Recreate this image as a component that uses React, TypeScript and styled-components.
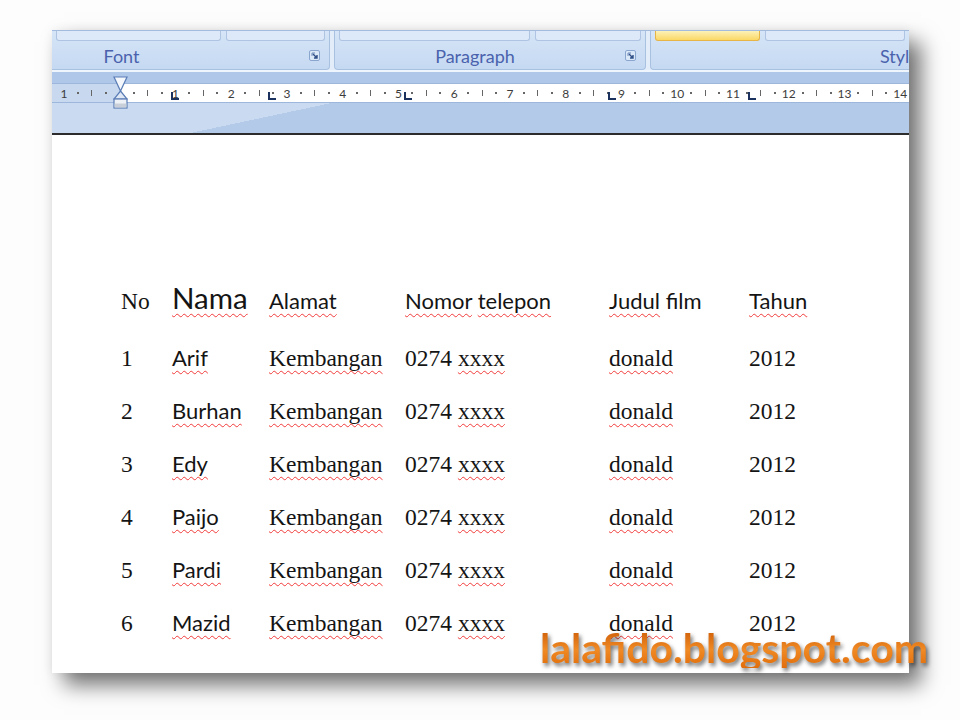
import React from 'react';
import styled, { createGlobalStyle } from 'styled-components';

// column starts, measured from the left edge of the window frame
const columnStarts = [69, 120, 217, 353, 557, 697];

const rows = [
  { no: '1', name: 'Arif' },
  { no: '2', name: 'Burhan' },
  { no: '3', name: 'Edy' },
  { no: '4', name: 'Paijo' },
  { no: '5', name: 'Pardi' },
  { no: '6', name: 'Mazid' },
];

const GlobalStyle = createGlobalStyle`
  html, body {
    margin: 0;
    padding: 0;
    background: #ffffff;
  }
  body {
    width: 960px;
    height: 720px;
    overflow: hidden;
    font-family: 'Lato', 'Liberation Sans', sans-serif;
  }
`;

const RulerMarks: React.FC = () => {
  const marks: React.ReactNode[] = [];
  for (let n = -1; n <= 14; n++) {
    const label = n === 0 ? '' : String(Math.abs(n));
    marks.push(<Mark key={`n${n}`} $kind="num">{label}</Mark>);
    marks.push(<Mark key={`a${n}`} $kind="dot" />);
    marks.push(<Mark key={`b${n}`} $kind="bar" />);
    marks.push(<Mark key={`c${n}`} $kind="dot" />);
  }
  return <Marks>{marks}</Marks>;
};

const Launcher: React.FC = () => (
  <LauncherBox>
    <svg width="11" height="11" viewBox="0 0 11 11">
      <rect x="0.5" y="0.5" width="10" height="10" rx="1.5" fill="#dbe8f8" stroke="#8aa6cf" />
      <path d="M3 3 H6 M3 3 V6" stroke="#6d88b8" strokeWidth="1" fill="none" />
      <path d="M4 4 L8 8 M8 5 V8 H5" stroke="#2f4f86" strokeWidth="1.4" fill="none" />
    </svg>
  </LauncherBox>
);

const IndentMarker: React.FC = () => (
  <Hourglass>
    <svg width="15" height="33" viewBox="0 0 15 33">
      <path d="M1 1 H14 L7.5 15 Z" fill="#f4f8fd" stroke="#5b7db6" strokeWidth="1.2" />
      <path d="M7.5 15 L14 23 H1 Z" fill="#dfe8f4" stroke="#5b7db6" strokeWidth="1.2" />
      <rect x="1" y="23" width="13" height="9" fill="#eef2f7" stroke="#5b7db6" strokeWidth="1.2" />
      <rect x="1.6" y="27.5" width="11.8" height="4" fill="#c9cfd8" />
    </svg>
  </Hourglass>
);

const App: React.FC = () => {
  return (
    <Page>
      <GlobalStyle />
      <Frame>
        <Ribbon>
          <Group $width={278} $cutLeft>
            <Stubs>
              <Stub $width={165} />
              <Stub />
            </Stubs>
            <GroupFoot>
              <GroupLabel $padRight={118}>Font</GroupLabel>
              <Launcher />
            </GroupFoot>
          </Group>
          <Group $width={312}>
            <Stubs>
              <Stub $width={191} />
              <Stub />
            </Stubs>
            <GroupFoot>
              <GroupLabel $padRight={10}>Paragraph</GroupLabel>
              <Launcher />
            </GroupFoot>
          </Group>
          <Group $cutRight>
            <Stubs>
              <Stub $width={105} $active />
              <Stub />
            </Stubs>
            <GroupFoot>
              <GroupLabel $padLeft={229} $left>Styles</GroupLabel>
            </GroupFoot>
          </Group>
        </Ribbon>

        <RulerArea>
          <RulerStrip>
            <RulerMarks />
          </RulerStrip>
          <RulerBelow />
          <IndentMarker />
          {columnStarts.slice(1).map(x => (
            <TabStop key={x} style={{ left: x - 1 }} />
          ))}
        </RulerArea>

        <Document>
          <Table>
            <Row $head>
              <Cell $serif>No</Cell>
              <Cell $size={29.5}><Misspelled>Nama</Misspelled></Cell>
              <Cell><Misspelled>Alamat</Misspelled></Cell>
              <Cell><Misspelled>Nomor</Misspelled> <Misspelled>telepon</Misspelled></Cell>
              <Cell><Misspelled>Judul</Misspelled> film</Cell>
              <Cell><Misspelled>Tahun</Misspelled></Cell>
            </Row>
            {rows.map(r => (
              <Row key={r.no}>
                <Cell $serif>{r.no}</Cell>
                <Cell><Misspelled>{r.name}</Misspelled></Cell>
                <Cell $serif><Misspelled>Kembangan</Misspelled></Cell>
                <Cell $serif>0274 <Misspelled>xxxx</Misspelled></Cell>
                <Cell $serif><Misspelled>donald</Misspelled></Cell>
                <Cell $serif>2012</Cell>
              </Row>
            ))}
          </Table>
        </Document>
      </Frame>
      <Watermark>lalafido.blogspot.com</Watermark>
    </Page>
  );
};

export default App;

const Page = styled.div`
  position: relative;
  width: 960px;
  height: 720px;
  box-sizing: border-box;
  padding: 30px 0 0 52px;
  background: #fdfdfd;
`;

const Frame = styled.div`
  width: 857px;
  height: 643px;
  display: flex;
  flex-direction: column;
  overflow: hidden;
  background: #ffffff;
  box-shadow: 12px 12px 20px rgba(0, 0, 0, 0.55), 0 0 10px rgba(0, 0, 0, 0.06);
`;

const Ribbon = styled.div`
  height: 42px;
  flex: 0 0 42px;
  box-sizing: border-box;
  display: flex;
  gap: 4px;
  background: #e3edf9;
  border-top: 1px solid #a3bbdd;
  border-bottom: 2px solid #eef5fc;
`;

interface GroupProps {
  $width?: number;
  $cutLeft?: boolean;
  $cutRight?: boolean;
}

const Group = styled.div<GroupProps>`
  flex: ${p => (p.$width ? `0 0 ${p.$width}px` : '1')};
  box-sizing: border-box;
  display: flex;
  flex-direction: column;
  background: linear-gradient(#d6e5f7, #c5d9f2);
  border: 1px solid #a9c1e1;
  border-top: none;
  border-left: ${p => (p.$cutLeft ? 'none' : '1px solid #a9c1e1')};
  border-right: ${p => (p.$cutRight ? 'none' : '1px solid #a9c1e1')};
  border-radius: ${p => (p.$cutLeft ? '0 0 4px 0' : p.$cutRight ? '0 0 0 4px' : '0 0 4px 4px')};
  min-width: 0;
`;

const Stubs = styled.div`
  height: 10px;
  display: flex;
  gap: 5px;
  padding: 0 4px;
`;

const Stub = styled.div<{ $width?: number; $active?: boolean }>`
  flex: ${p => (p.$width ? `0 0 ${p.$width}px` : '1')};
  box-sizing: border-box;
  background: ${p => (p.$active ? 'linear-gradient(#fdf1b8, #fbd865)' : '#dde9f8')};
  border: 1px solid ${p => (p.$active ? '#e6b447' : '#aec4e2')};
  border-top: none;
  border-radius: 0 0 3px 3px;
`;

const GroupFoot = styled.div`
  flex: 1;
  display: flex;
  align-items: center;
  padding: 2px 9px 0 0;
`;

const GroupLabel = styled.div<{ $padRight?: number; $padLeft?: number; $left?: boolean }>`
  flex: 1;
  padding-right: ${p => p.$padRight ?? 0}px;
  padding-left: ${p => p.$padLeft ?? 0}px;
  text-align: ${p => (p.$left ? 'left' : 'center')};
  white-space: nowrap;
  font-family: 'Lato', 'Liberation Sans', sans-serif;
  font-size: 18px;
  line-height: 1;
  color: #4a62ad;
`;

const LauncherBox = styled.div`
  display: flex;
  width: 11px;
  height: 11px;
  margin-top: -1px;
`;

const RulerArea = styled.div`
  position: relative;
  flex: 0 0 63px;
  box-sizing: border-box;
  display: flex;
  flex-direction: column;
  padding-top: 11px;
  background: #afc7e8;
  border-bottom: 2px solid #2c2c2c;
`;

const RulerStrip = styled.div`
  height: 18px;
  background: linear-gradient(to right, #c8d8ef 68px, #ffffff 68px);
  border-top: 1px solid #9db6db;
  border-bottom: 1px solid #9db6db;
`;

const RulerBelow = styled.div`
  flex: 1;
  background: linear-gradient(168deg, #c9daf1 0 28%, #b3cae9 28% 100%);
`;

const Marks = styled.div`
  height: 100%;
  display: flex;
  padding-left: 5px;
`;

const Mark = styled.span<{ $kind: 'num' | 'dot' | 'bar' }>`
  flex: 0 0 13.95px;
  display: flex;
  align-items: center;
  justify-content: center;
  font-family: 'Lato', 'Liberation Sans', sans-serif;
  font-size: 12px;
  color: #3c3c3c;
  &::after {
    content: '';
    display: ${p => (p.$kind === 'num' ? 'none' : 'block')};
    width: ${p => (p.$kind === 'dot' ? 2 : 1)}px;
    height: ${p => (p.$kind === 'dot' ? 2 : 6)}px;
    background: #666666;
  }
`;

const Hourglass = styled.div`
  position: absolute;
  left: 61px;
  top: 4px;
  width: 15px;
  height: 33px;
  display: flex;
`;

const TabStop = styled.div`
  position: absolute;
  top: 20px;
  width: 8px;
  height: 8px;
  border-left: 2px solid #1c325e;
  border-bottom: 2px solid #1c325e;
  box-sizing: border-box;
`;

const Document = styled.div`
  flex: 1;
  background: #ffffff;
  padding: 148px 0 0 ${columnStarts[0]}px;
`;

const Table = styled.div`
  display: flex;
  flex-direction: column;
`;

const Row = styled.div<{ $head?: boolean }>`
  display: grid;
  grid-template-columns: ${columnStarts
    .slice(1)
    .map((x, i) => `${x - columnStarts[i]}px`)
    .join(' ')} 1fr;
  align-items: baseline;
  height: ${p => (p.$head ? 64 : 53)}px;
`;

const Cell = styled.div<{ $serif?: boolean; $size?: number }>`
  font-family: ${p => (p.$serif ? "'Liberation Serif', serif" : "'Lato', 'Liberation Sans', sans-serif")};
  font-size: ${p => p.$size ?? (p.$serif ? 23.5 : 22)}px;
  line-height: 1;
  white-space: nowrap;
  color: #141414;
`;

const Misspelled = styled.span`
  text-decoration: underline wavy #f23b3b;
  text-decoration-thickness: 1px;
  text-underline-offset: 4px;
  text-decoration-skip-ink: none;
`;

const Watermark = styled.div`
  position: absolute;
  left: 540px;
  top: 627px;
  font-family: 'Lato', 'Liberation Sans', sans-serif;
  font-weight: 700;
  font-size: 41px;
  line-height: 1;
  white-space: nowrap;
  background: linear-gradient(#c95806, #f08a24 55%, #e06d0b);
  -webkit-background-clip: text;
  background-clip: text;
  color: transparent;
  filter: drop-shadow(2px 3px 2px rgba(0, 0, 0, 0.55));
`;
